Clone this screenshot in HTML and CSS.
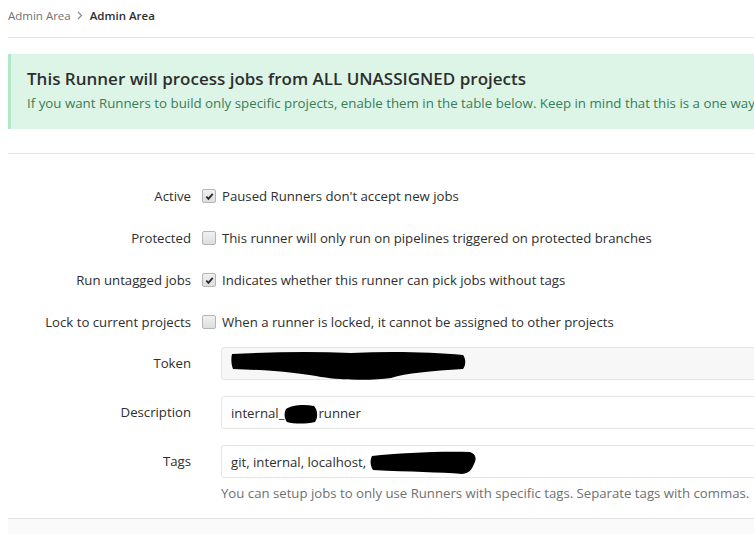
FILE: index.html
```html
<!DOCTYPE html>
<html>
<head>
<meta charset="utf-8">
<link rel="stylesheet" href="styles.css">
</head>
<body>
<div class="page">
  <nav class="breadcrumbs">
    <span class="crumb">Admin Area</span>
    <svg class="chev" width="6" height="9" viewBox="0 0 6 9"><path d="M1 1l3.5 3.5L1 8" fill="none" stroke="#8a8a8a" stroke-width="1.2"/></svg>
    <span class="crumb current">Admin Area</span>
  </nav>

  <div class="banner">
    <h4 class="banner-title">This Runner will process jobs from ALL UNASSIGNED projects</h4>
    <p class="banner-text">If you want Runners to build only specific projects, enable them in the table below. Keep in mind that this is a one way</p>
  </div>

  <form class="runner-form">
    <div class="row check-row">
      <label class="lbl">Active</label>
      <div class="ctl"><span class="cb checked"><svg viewBox="0 0 10 10" width="9" height="9"><path d="M1.5 5.2l2.3 2.4L8.6 2" fill="none" stroke="#2a2a2a" stroke-width="2"/></svg></span><span>Paused Runners don't accept new jobs</span></div>
    </div>
    <div class="row check-row">
      <label class="lbl">Protected</label>
      <div class="ctl"><span class="cb"></span><span>This runner will only run on pipelines triggered on protected branches</span></div>
    </div>
    <div class="row check-row">
      <label class="lbl">Run untagged jobs</label>
      <div class="ctl"><span class="cb checked"><svg viewBox="0 0 10 10" width="9" height="9"><path d="M1.5 5.2l2.3 2.4L8.6 2" fill="none" stroke="#2a2a2a" stroke-width="2"/></svg></span><span>Indicates whether this runner can pick jobs without tags</span></div>
    </div>
    <div class="row check-row">
      <label class="lbl">Lock to current projects</label>
      <div class="ctl"><span class="cb"></span><span>When a runner is locked, it cannot be assigned to other projects</span></div>
    </div>

    <div class="row input-row first-input">
      <label class="lbl">Token</label>
      <div class="input readonly">
        <svg class="scribble" width="236" height="30" viewBox="0 0 236 30"><path d="M1 3 C40 1 80 0 120 2 C160 0 200 1 232 4 C235 8 235 14 232 18 C200 20 175 22 160 27 C140 30 110 29 90 26 C70 22 40 19 2 18 C0 13 0 7 1 3 Z" fill="#000"/></svg>
      </div>
    </div>
    <div class="row input-row">
      <label class="lbl">Description</label>
      <div class="input"><span>internal_</span><svg class="blob" width="34" height="20" viewBox="0 0 34 20"><path d="M2 5 C8 1 20 0 30 2 C34 6 34 14 31 18 C22 20 10 20 3 18 C0 14 0 9 2 5 Z" fill="#000"/></svg><span>runner</span></div>
    </div>
    <div class="row input-row">
      <label class="lbl">Tags</label>
      <div class="input-wrap">
        <div class="input"><span>git, internal, localhost,&nbsp;</span><svg class="blob" width="107" height="24" viewBox="0 0 107 24"><path d="M2 5 C30 2 70 0 100 1 C106 3 107 8 104 13 C102 18 100 22 92 23 C70 21 40 21 3 19 C0 14 0 9 2 5 Z" fill="#000"/></svg></div>
        <p class="help">You can setup jobs to only use Runners with specific tags. Separate tags with commas.</p>
      </div>
    </div>

    <div class="actions"></div>
  </form>
</div>
</body>
</html>
```

FILE: styles.css
```css
html, body {
  margin: 0;
  padding: 0;
  background: #fff;
  overflow: hidden;
}
body {
  font-family: "Open Sans", "Noto Sans", sans-serif;
  color: #2e2e2e;
  font-size: 13.2px;
}
.page {
  width: 1100px;
  padding-left: 8px;
}
.breadcrumbs {
  display: flex;
  align-items: center;
  height: 30px;
  padding-bottom: 7px;
  border-bottom: 1px solid #e5e5e5;
  font-size: 11.5px;
}
.crumb {
  color: #707070;
}
.chev {
  margin: 0 7px 0 6px;
}
.crumb.current {
  color: #2e2e2e;
  font-weight: 600;
}
.banner {
  margin-top: 16px;
  background: #dcf5e7;
  border-left: 3px solid #b0e8c8;
  padding: 13px 16px 14px;
  height: 48px;
  width: 740px;
}
.banner-title {
  margin: 0;
  font-size: 17px;
  font-weight: 600;
  line-height: 24px;
  color: #2e2e2e;
}
.banner-text {
  margin: 2px 0 0;
  font-size: 13.3px;
  line-height: 20px;
  color: #3a7c5a;
  white-space: nowrap;
}
.runner-form {
  margin-top: 24px;
  border-top: 1px solid #e5e5e5;
  padding-top: 21px;
}
.row {
  display: grid;
  grid-template-columns: 183px 1fr;
  column-gap: 30px;
  align-items: center;
}
.lbl {
  text-align: right;
  color: #2e2e2e;
}
.check-row {
  height: 42px;
}
.ctl {
  display: flex;
  align-items: center;
  margin-left: -19px;
}
.cb {
  width: 12px;
  height: 12px;
  border: 1px solid #b5b5b5;
  border-radius: 2px;
  background: linear-gradient(#f0f0f0, #dedede);
  margin-right: 6px;
  display: flex;
  align-items: center;
  justify-content: center;
  flex: none;
}
.input-row {
  margin-top: 16px;
  align-items: start;
}
.input-row .lbl {
  line-height: 33px;
}
.first-input {
  margin-top: 4px;
}
.input {
  height: 31px;
  border: 1px solid #e5e5e5;
  border-radius: 3px;
  display: flex;
  align-items: center;
  padding-left: 9px;
  background: #fff;
}
.input.readonly {
  background: #f7f7f7;
}
.scribble {
  margin-top: 4px;
}
.blob {
  margin-top: 2px;
}
.help {
  margin: 5px 0 0;
  color: #707070;
  line-height: 20px;
}
.actions {
  margin-top: 15px;
  border-top: 1px solid #e5e5e5;
  background: #fafafa;
  height: 60px;
}
```
